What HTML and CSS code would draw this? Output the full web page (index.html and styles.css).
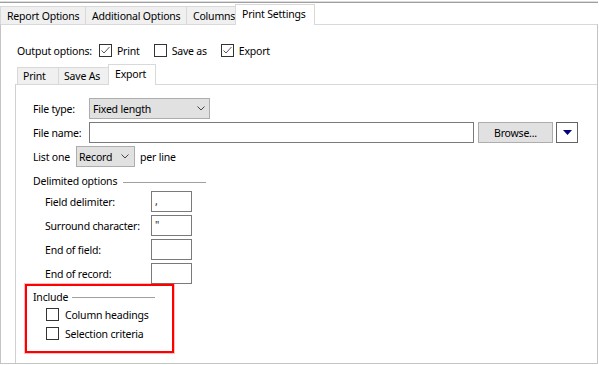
FILE: index.html
```html
<!DOCTYPE html>
<html>
<head>
<meta charset="utf-8">
<link rel="stylesheet" href="styles.css">
</head>
<body>
<div class="window">
  <div class="topline"></div>
  <div class="tabs main-tabs">
    <div class="tab t-report">Report Options</div>
    <div class="tab t-additional">Additional Options</div>
    <div class="tab t-columns">Columns</div>
    <div class="tab active t-print-settings">Print Settings</div>
  </div>
  <div class="panel">
    <div class="output-row">
      <span class="out-label">Output options:</span>
      <label class="check"><span class="box"><svg width="11" height="11" viewBox="0 0 11 11"><polyline points="1.5,5.5 4,8 9.5,2" fill="none" stroke="#555" stroke-width="1"/></svg></span>Print</label>
      <label class="check"><span class="box"></span>Save as</label>
      <label class="check"><span class="box"><svg width="11" height="11" viewBox="0 0 11 11"><polyline points="1.5,5.5 4,8 9.5,2" fill="none" stroke="#555" stroke-width="1"/></svg></span>Export</label>
    </div>
    <div class="tabs sub-tabs">
      <div class="tab s-print">Print</div>
      <div class="tab s-saveas">Save As</div>
      <div class="tab active s-export">Export</div>
    </div>
    <div class="subpanel">
      <div class="row">
        <span class="lbl">File type:</span>
        <div class="select sel-type"><span>Fixed length</span><svg class="chev" width="8" height="5" viewBox="0 0 8 5"><polyline points="0.5,0.5 4,4 7.5,0.5" fill="none" stroke="#444" stroke-width="1"/></svg></div>
      </div>
      <div class="row">
        <span class="lbl">File name:</span>
        <div class="input fname"></div>
        <div class="btn">Browse...</div>
        <div class="dd"><svg width="9" height="5" viewBox="0 0 9 5"><polygon points="0,0 9,0 4.5,5" fill="#000080"/></svg></div>
      </div>
      <div class="row">
        <span class="lbl-short">List one</span>
        <div class="select sel-rec"><span>Record</span><svg class="chev" width="8" height="5" viewBox="0 0 8 5"><polyline points="0.5,0.5 4,4 7.5,0.5" fill="none" stroke="#444" stroke-width="1"/></svg></div>
        <span class="per-line">per line</span>
      </div>
      <div class="group-title delim"><span>Delimited options</span><span class="rule"></span></div>
      <div class="frow"><span class="flbl">Field delimiter:</span><div class="input small">,</div></div>
      <div class="frow"><span class="flbl">Surround character:</span><div class="input small">"</div></div>
      <div class="frow"><span class="flbl">End of field:</span><div class="input small"></div></div>
      <div class="frow"><span class="flbl">End of record:</span><div class="input small"></div></div>
      <div class="include">
        <div class="group-title inc"><span>Include</span><span class="rule"></span></div>
        <label class="check inc-check"><span class="box"></span>Column headings</label>
        <label class="check inc-check"><span class="box"></span>Selection criteria</label>
      </div>
    </div>
  </div>
</div>
</body>
</html>
```
FILE: styles.css
```css
* { box-sizing: border-box; }
html, body { margin: 0; padding: 0; background: #fff; }
body {
  font-family: "Noto Sans", "DejaVu Sans", sans-serif;
  font-size: 10.5px;
  letter-spacing: -0.2px;
  color: #000;
  width: 599px;
  height: 365px;
  overflow: hidden;
}
.window { width: 598px; }
.topline {
  margin-top: 1px;
  height: 0;
  border-top: 1px solid #dcdcdc;
  border-bottom: 1px solid #a0a0a0;
}
.tabs { display: flex; align-items: flex-end; position: relative; z-index: 2; }
.main-tabs { height: 21px; }
.tab {
  background: #f0f0f0;
  border: 1px solid #d9d9d9;
  border-bottom: none;
  height: 18px;
  line-height: 18px;
  padding: 0 0 0 6px;
  white-space: nowrap;
  overflow: hidden;
  margin-left: -1px;
}
.tab:first-child { margin-left: 0; }
.tab.active {
  background: #fff;
  height: 21px;
  margin-bottom: -1px;
  line-height: 19px;
  position: relative;
  z-index: 3;
}
.t-report { width: 86px; }
.t-additional { width: 102px; }
.t-columns { width: 50px; }
.t-print-settings { width: 80px; }

.panel {
  height: 340px;
  border: 1px solid #c4c4c4;
  border-top: 1px solid #d9d9d9;
  padding: 15px 0 0 16px;
  display: flex;
  flex-direction: column;
}
.output-row {
  display: flex;
  align-items: center;
  height: 21px;
}
.out-label { margin-right: 7px; }
.check { display: flex; align-items: center; margin-right: 14px; }
.box {
  width: 13px;
  height: 13px;
  border: 1px solid #333;
  background: #fff;
  margin-right: 5px;
  display: flex;
  align-items: center;
  justify-content: center;
  flex: none;
}
.sub-tabs { margin-top: 3px; height: 20px; padding-left: 0; }
.sub-tabs .tab { height: 17px; line-height: 17px; padding-left: 5px; }
.sub-tabs .tab.active { height: 21px; line-height: 19px; padding-left: 6px; }
.s-print { width: 42px; }
.s-saveas { width: 51px; }
.s-export { width: 48px; }

.subpanel {
  flex: 1;
  margin-left: -2px;
  border-left: 1px solid #d0d0d0;
  border-top: 1px solid #d9d9d9;
  padding: 13px 0 0 17px;
  display: flex;
  flex-direction: column;
  align-items: flex-start;
}
.row { display: flex; align-items: center; height: 21px; margin-bottom: 3px; }
.lbl { width: 56px; }
.lbl-short { width: 43px; }
.select {
  height: 21px;
  background: #e1e1e1;
  border: 1px solid #adadad;
  display: flex;
  align-items: center;
  justify-content: space-between;
}
.sel-type { width: 121px; padding: 0 4px 0 3px; }
.sel-rec { width: 59px; padding: 0 5px 0 2px; }
.chev { display: block; }
.per-line { margin-left: 5px; }
.input {
  height: 21px;
  border: 1px solid #7a7a7a;
  background: #fff;
}
.fname { width: 385px; }
.btn {
  margin-left: 4px;
  width: 75px;
  height: 21px;
  background: #e1e1e1;
  border: 1px solid #adadad;
  display: flex;
  align-items: center;
  justify-content: center;
}
.dd {
  margin-left: 3px;
  width: 22px;
  height: 21px;
  border: 1px solid #646464;
  background: #fff;
  display: flex;
  align-items: center;
  justify-content: center;
}
.group-title { display: flex; align-items: center; }
.delim { margin-top: 2px; height: 18px; margin-bottom: 1px; }
.rule { height: 1px; background: #a0a0a0; width: 83px; margin-left: 6px; margin-top: 2px; }
.frow { display: flex; align-items: center; height: 21px; margin-bottom: 3px; padding-left: 12px; }
.frow:last-of-type { margin-bottom: 0; }
.flbl { width: 106px; }
.small { width: 41px; padding-left: 3px; line-height: 19px; color: #1a1a1a; }
.include {
  margin-left: -8px;
  margin-top: -3px;
  width: 149px;
  height: 69px;
  border: 2px solid #f00;
  box-shadow: 0 0 0 1px rgba(255, 0, 0, 0.25);
  padding: 2px 0 0 6px;
}
.inc { height: 17px; }
.inc .rule { margin-left: 4px; }
.inc-check { height: 19px; padding-left: 13px; margin-right: 0; }
.inc-check .box { margin-right: 6px; }
```
